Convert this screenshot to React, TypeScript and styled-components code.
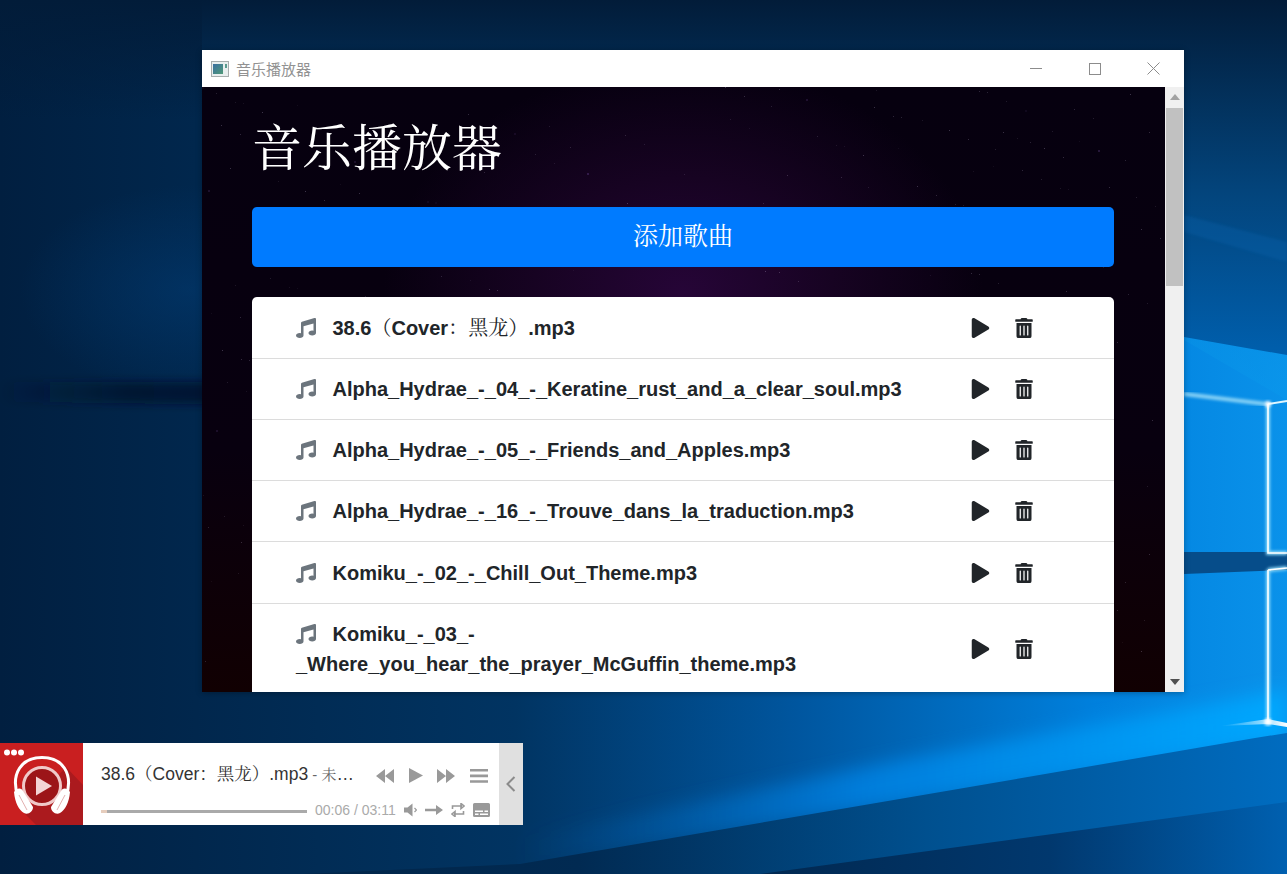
import React from "react";
import styled, { createGlobalStyle } from "styled-components";
import { FaMusic, FaPlay, FaTrashAlt } from "react-icons/fa";

const songs = [
  "38.6（Cover：黑龙）.mp3",
  "Alpha_Hydrae_-_04_-_Keratine_rust_and_a_clear_soul.mp3",
  "Alpha_Hydrae_-_05_-_Friends_and_Apples.mp3",
  "Alpha_Hydrae_-_16_-_Trouve_dans_la_traduction.mp3",
  "Komiku_-_02_-_Chill_Out_Theme.mp3",
  "Komiku_-_03_-_Where_you_hear_the_prayer_McGuffin_theme.mp3",
  "Komiku_-_04_-_Skate.mp3",
];

const stars = Array.from({ length: 420 }, (_, i) => ({
  x: (i * 167 + (i % 7) * 53 + (i % 13) * 29) % 963,
  y: (i * 97 + (i % 11) * 41 + (i % 5) * 17) % 605,
  o: 0.06 + ((i * 13) % 10) / 45,
}));

const splitCjk = (text: string) => text.split(/([\u4e00-\u9fff\uff00-\uffef]+)/);

const App: React.FC = () => {
  return (
    <Desktop>
      <GlobalStyle />
      <Wallpaper viewBox="0 0 1287 874" preserveAspectRatio="none">
        <defs>
          <linearGradient id="wall" x1="0" y1="0" x2="1" y2="0">
            <stop offset="0" stopColor="#011f40" />
            <stop offset="0.4" stopColor="#013462" />
            <stop offset="0.62" stopColor="#00569f" />
            <stop offset="0.85" stopColor="#0080dd" />
            <stop offset="1" stopColor="#0a92ea" />
          </linearGradient>
          <linearGradient id="topShade" x1="0" y1="0" x2="0" y2="1">
            <stop offset="0" stopColor="#021c39" />
            <stop offset="0.55" stopColor="#03457d" />
            <stop offset="1" stopColor="#005fad" />
          </linearGradient>
          <linearGradient id="topLeft" x1="0" y1="0" x2="0" y2="1">
            <stop offset="0" stopColor="#021c39" />
            <stop offset="1" stopColor="#021c39" stopOpacity="0" />
          </linearGradient>
          <linearGradient id="midShade" x1="0" y1="0" x2="0" y2="1">
            <stop offset="0" stopColor="#006ec4" />
            <stop offset="1" stopColor="#0a9aec" stopOpacity="0.4" />
          </linearGradient>
          <linearGradient id="floor" x1="0" y1="0" x2="1" y2="0">
            <stop offset="0" stopColor="#01203f" />
            <stop offset="0.45" stopColor="#012a52" />
            <stop offset="0.72" stopColor="#00508f" />
            <stop offset="1" stopColor="#006cc0" />
          </linearGradient>
          <linearGradient id="floorLow" x1="0" y1="0" x2="1" y2="0">
            <stop offset="0" stopColor="#012850" />
            <stop offset="0.55" stopColor="#01386e" />
            <stop offset="1" stopColor="#0060b0" />
          </linearGradient>
          <linearGradient id="beam" x1="0" y1="0" x2="1" y2="0">
            <stop offset="0" stopColor="#0060b0" stopOpacity="0" />
            <stop offset="0.45" stopColor="#0080e0" stopOpacity="0.9" />
            <stop offset="1" stopColor="#00a8ff" />
          </linearGradient>
          <linearGradient id="flare" x1="0" y1="0" x2="1" y2="0">
            <stop offset="0" stopColor="#bfeeff" stopOpacity="0" />
            <stop offset="1" stopColor="#ffffff" />
          </linearGradient>
          <linearGradient id="leftBand" x1="0" y1="0" x2="1" y2="0">
            <stop offset="0" stopColor="#01142b" stopOpacity="0" />
            <stop offset="0.6" stopColor="#01142b" stopOpacity="0.7" />
            <stop offset="1" stopColor="#01142b" stopOpacity="0.8" />
          </linearGradient>
          <radialGradient id="leftGlow">
            <stop offset="0" stopColor="#02396f" stopOpacity="0.6" />
            <stop offset="1" stopColor="#02396f" stopOpacity="0" />
          </radialGradient>
          <filter id="soft" x="-20%" y="-50%" width="140%" height="200%">
            <feGaussianBlur stdDeviation="9" />
          </filter>
          <filter id="band" x="-5%" y="-100%" width="110%" height="300%">
            <feGaussianBlur stdDeviation="4" />
          </filter>
          <filter id="glow" x="-50%" y="-20%" width="200%" height="140%">
            <feGaussianBlur stdDeviation="1.6" />
          </filter>
        </defs>
        <rect width="1287" height="874" fill="url(#wall)" />
        <rect width="202" height="120" fill="url(#topLeft)" />
        <ellipse cx="190" cy="290" rx="170" ry="105" fill="url(#leftGlow)" />
        <polygon points="0,382 210,382 210,404 0,402" fill="url(#leftBand)" filter="url(#band)" />
        <polygon points="1184,0 1287,0 1287,400 1184,340" fill="url(#midShade)" />
        <polygon points="202,0 1287,0 1287,355 1184,337 202,50" fill="url(#topShade)" />
        <polygon points="1184,215 1287,242 1287,262 1184,232" fill="#0a6bb8" opacity="0.25" filter="url(#glow)" />

        <polygon points="1184,552 1287,552 1287,570 1184,574" fill="#064d8a" />

        <polygon points="520,838 900,760 1287,690 1287,740 520,866" fill="url(#beam)" filter="url(#soft)" />
        <polygon points="0,874 0,888 520,864 1255,738 1287,733 1287,874" fill="url(#floor)" />
        <polygon points="760,874 1287,802 1287,874" fill="url(#floorLow)" />

        <path d="M1184 394 L1266 404" stroke="#a8e4fb" strokeWidth="4" fill="none" opacity="0.8" filter="url(#glow)" />
        <path d="M1268 404 L1287 401" stroke="#dff6ff" strokeWidth="2" fill="none" />
        <path d="M1268 404 V553 H1287 M1268 570 V722 M1268 570 L1287 568" stroke="#8fdcfb" strokeWidth="4" fill="none" filter="url(#glow)" />
        <path d="M1268 404 V553 H1287 M1268 570 V722 M1268 570 L1287 568" stroke="#ffffff" strokeWidth="1.6" fill="none" />
        <polygon points="1220,726 1268,719 1287,723 1287,727 1268,724" fill="url(#flare)" />
        <circle cx="1268" cy="722" r="3.5" fill="#fff" filter="url(#glow)" />
        <circle cx="1268" cy="404" r="3" fill="#fff" filter="url(#glow)" />
      </Wallpaper>

      <Window>
        <TitleBar>
          <AppIcon viewBox="0 0 18 16">
            <defs>
              <linearGradient id="appIcon" x1="0" y1="0" x2="1" y2="1">
                <stop offset="0" stopColor="#3a6fa0" />
                <stop offset="1" stopColor="#4f9a78" />
              </linearGradient>
            </defs>
            <rect x="0.5" y="0.5" width="17" height="15" fill="#e8eeee" stroke="#a7adad" />
            <rect x="2" y="3" width="10" height="10" fill="url(#appIcon)" />
            <rect x="14" y="3" width="2" height="4" fill="#5a9a8e" />
          </AppIcon>
          <WindowTitle>音乐播放器</WindowTitle>
          <WindowButtons>
            <WindowButton>
              <svg width="12" height="12" viewBox="0 0 12 12"><path d="M0 5.5H13" stroke="#8c8c8c" /></svg>
            </WindowButton>
            <WindowButton>
              <svg width="12" height="12" viewBox="0 0 12 12"><rect x="0.5" y="0.5" width="11" height="11" fill="none" stroke="#8c8c8c" /></svg>
            </WindowButton>
            <WindowButton>
              <svg width="13" height="13" viewBox="0 0 13 13"><path d="M0.5 0.5L12.5 12.5M12.5 0.5L0.5 12.5" stroke="#8c8c8c" /></svg>
            </WindowButton>
          </WindowButtons>
        </TitleBar>
        <WindowBody>
          <Page>
            <StarField>
              {stars.map((s, i) => (
                <rect
                  key={i}
                  x={s.x}
                  y={s.y}
                  width={i % 17 === 0 ? 2 : 1}
                  height={i % 17 === 0 ? 2 : 1}
                  fill={i % 17 === 0 ? "#8a5fc0" : "#d9c8ee"}
                  opacity={s.o}
                />
              ))}
            </StarField>
            <PageTitle>音乐播放器</PageTitle>
            <AddButton>添加歌曲</AddButton>
            <SongList>
              {songs.map((song) => (
                <SongRow key={song}>
                  <SongName>
                    <NoteIcon />
                    {splitCjk(song).map((part, i) =>
                      i % 2 === 1 ? <CjkPart key={i}>{part}</CjkPart> : part
                    )}
                  </SongName>
                  <SongActions>
                    <PlayIcon />
                    <TrashIcon />
                  </SongActions>
                </SongRow>
              ))}
            </SongList>
          </Page>
          <ScrollBar>
            <ScrollArrow viewBox="0 0 10 6"><path d="M5 0L10 6H0z" fill="#a3a3a3" /></ScrollArrow>
            <ScrollTrack>
              <ScrollThumb />
            </ScrollTrack>
            <ScrollArrow viewBox="0 0 10 6"><path d="M0 0H10L5 6z" fill="#505050" /></ScrollArrow>
          </ScrollBar>
        </WindowBody>
      </Window>

      <Player>
        <Cover>
          <CoverArt viewBox="0 0 83 82">
            <polygon points="24,70 66,24 83,42 83,82 36,82" fill="#ab1a1e" />
            <circle cx="7" cy="9.5" r="3" fill="#fff" />
            <circle cx="14" cy="9.5" r="3" fill="#fff" />
            <circle cx="21" cy="9.5" r="3" fill="#fff" />
            <path d="M18 54 C10 30 22 14.5 42 14.5 C62 14.5 74 30 66 54" fill="none" stroke="#fff" strokeWidth="3" />
            <circle cx="42" cy="43" r="18.5" fill="#9c1518" stroke="#f0c9c9" strokeWidth="3" />
            <path d="M36 33.5L52 43L36 52.5z" fill="#f3d5d5" />
            <path d="M14 49 C17 44 22 45 23 48 L33 64 C33 69 28 72 24 70 C19 67 15 60 14 49z" fill="#fff" />
            <path d="M70 49 C67 44 62 45 61 48 L51 64 C51 69 56 72 60 70 C65 67 69 60 70 49z" fill="#fff" />
            <path d="M19 52 L27 67 M65 52 L57 67" stroke="#e3b0b0" strokeWidth="1" />
          </CoverArt>
        </Cover>
        <PlayerMain>
          <PlayerTop>
            <TrackInfo>
              38.6（Cover：黑龙）.mp3<TrackAuthor> - 未知艺术家</TrackAuthor>
            </TrackInfo>
            <Controls>
              <ControlIcon width="18" height="14" viewBox="0 0 18 14"><path d="M9 0V14L0 7zM18 0V14L9 7z" /></ControlIcon>
              <ControlIcon width="14" height="15" viewBox="0 0 14 15"><path d="M0 0L14 7.5L0 15z" /></ControlIcon>
              <ControlIcon width="18" height="14" viewBox="0 0 18 14"><path d="M0 0L9 7L0 14zM9 0L18 7L9 14z" /></ControlIcon>
              <ControlIcon width="18" height="14" viewBox="0 0 18 14"><path d="M0 0H18V2.6H0zM0 5.6H18V8.2H0zM0 11.2H18V13.8H0z" /></ControlIcon>
            </Controls>
          </PlayerTop>
          <PlayerBottom>
            <ProgressTrack>
              <ProgressFill style={{ width: `${(6 / 191) * 100}%` }} />
            </ProgressTrack>
            <TimeLabel>00:06 / 03:11</TimeLabel>
            <Modes>
              <ControlIcon width="13" height="14" viewBox="0 0 13 14"><path d="M0 4.5H3.5L8.5 0.5V13.5L3.5 9.5H0z" /><path d="M10.5 5L12.5 7L10.5 9" fill="none" stroke="#999" strokeWidth="1.2" /></ControlIcon>
              <ControlIcon width="18" height="12" viewBox="0 0 18 12"><path d="M0 4.8H11V1L18 6L11 11V7.2H0z" /></ControlIcon>
              <ControlIcon width="14" height="14" viewBox="0 0 14 14"><path d="M1.5 6V3H11M12.5 8V11H3M10 0.5L13 3L10 5.5zM4 8.5L1 11L4 13.5z" fill="none" stroke="#999" strokeWidth="1.6" /></ControlIcon>
              <ControlIcon width="17" height="14" viewBox="0 0 17 14"><path fillRule="evenodd" d="M1.5 0H15.5A1.5 1.5 0 0 1 17 1.5V12.5A1.5 1.5 0 0 1 15.5 14H1.5A1.5 1.5 0 0 1 0 12.5V1.5A1.5 1.5 0 0 1 1.5 0zM2 7.5V9H10V7.5zM11.5 7.5V9H15V7.5zM2 10.5V12H5.5V10.5zM7 10.5V12H15V10.5z" /></ControlIcon>
            </Modes>
          </PlayerBottom>
        </PlayerMain>
        <Collapse>
          <svg width="10" height="16" viewBox="0 0 10 16"><path d="M8.5 1L1.5 8L8.5 15" fill="none" stroke="#8b8b8b" strokeWidth="2" /></svg>
        </Collapse>
      </Player>
    </Desktop>
  );
};

export default App;

const GlobalStyle = createGlobalStyle`
  html, body {
    margin: 0;
    padding: 0;
    overflow: hidden;
  }
  * {
    box-sizing: border-box;
  }
`;

const serifStack = `"Liberation Sans", "Noto Serif CJK SC", serif`;

const Desktop = styled.div`
  position: relative;
  width: 1287px;
  height: 874px;
  overflow: hidden;
  font-family: "Liberation Sans", "Noto Sans CJK SC", sans-serif;
`;

const Wallpaper = styled.svg`
  position: absolute;
  inset: 0;
  width: 100%;
  height: 100%;
`;

const Window = styled.div`
  position: absolute;
  left: 202px;
  top: 50px;
  width: 982px;
  height: 642px;
  display: flex;
  flex-direction: column;
  background: #fff;
  box-shadow: 0 1px 6px rgba(0, 0, 0, 0.3);
`;

const TitleBar = styled.div`
  height: 37px;
  flex: none;
  display: flex;
  align-items: center;
  padding-left: 9px;
  background: #fff;
`;

const AppIcon = styled.svg`
  width: 18px;
  height: 16px;
`;

const WindowTitle = styled.span`
  margin-left: 7px;
  font-size: 15px;
  color: #929292;
`;

const WindowButtons = styled.div`
  margin-left: auto;
  display: flex;
  padding-right: 1px;
`;

const WindowButton = styled.div`
  width: 59px;
  height: 36px;
  display: flex;
  align-items: center;
  justify-content: center;
`;

const WindowBody = styled.div`
  flex: 1;
  min-height: 0;
  display: flex;
`;

const Page = styled.div`
  position: relative;
  flex: 1;
  min-width: 0;
  overflow: hidden;
  padding: 24px 51px 0 50px;
  background: radial-gradient(ellipse 300px 230px at 50% 34%, #260537 0%, #170322 50%, transparent 100%),
    linear-gradient(#06000f 0%, #08000f 60%, #110002 100%);
`;

const StarField = styled.svg`
  position: absolute;
  inset: 0;
  width: 100%;
  height: 100%;
`;

const PageTitle = styled.h1`
  position: relative;
  margin: 0 0 31px;
  height: 65px;
  font-family: "Noto Serif CJK SC", "Liberation Serif", serif;
  font-size: 50px;
  line-height: 67px;
  font-weight: 400;
  color: #fff;
`;

const AddButton = styled.button`
  position: relative;
  display: block;
  width: 100%;
  height: 60px;
  padding: 0 0 6px;
  border: none;
  border-radius: 5px;
  background: #007bff;
  color: #fff;
  font-family: ${serifStack};
  font-size: 25px;
`;

const SongList = styled.div`
  position: relative;
  margin-top: 30.4px;
  background: #fff;
  border-radius: 5px;
`;

const SongRow = styled.div`
  display: flex;
  align-items: center;
  padding: 15px 44px;
  min-height: 61.25px;
  border-bottom: 1px solid #dcdcdc;
`;

const SongName = styled.div`
  width: 620px;
  font-family: ${serifStack};
  font-size: 20px;
  line-height: 30px;
  font-weight: 700;
  color: #212529;
`;

const CjkPart = styled.span`
  font-weight: 400;
`;

const NoteIcon = styled(FaMusic)`
  width: 20px;
  height: 20px;
  margin-right: 16.5px;
  color: #6c757d;
  vertical-align: -3px;
`;

const SongActions = styled.div`
  margin-left: auto;
  display: flex;
  align-items: center;
  gap: 25px;
  padding-right: 37px;
  color: #212529;
`;

const PlayIcon = styled(FaPlay)`
  width: 19px;
  height: 20px;
`;

const TrashIcon = styled(FaTrashAlt)`
  width: 18px;
  height: 20px;
`;

const ScrollBar = styled.div`
  width: 19px;
  flex: none;
  display: flex;
  flex-direction: column;
  align-items: center;
  background: #f0f0f0;
`;

const ScrollArrow = styled.svg`
  width: 10px;
  height: 6px;
  margin: 7px 0;
  flex: none;
`;

const ScrollTrack = styled.div`
  flex: 1;
  width: 100%;
  padding: 1px;
`;

const ScrollThumb = styled.div`
  width: 17px;
  height: 178px;
  background: #c1c1c1;
`;

const Player = styled.div`
  position: absolute;
  left: 0;
  top: 743px;
  width: 523px;
  height: 82px;
  display: flex;
  background: #fff;
`;

const Cover = styled.div`
  width: 83px;
  flex: none;
  background: #c91f20;
`;

const CoverArt = styled.svg`
  display: block;
  width: 83px;
  height: 82px;
`;

const PlayerMain = styled.div`
  flex: 1;
  min-width: 0;
  padding: 19px 11px 0 18px;
`;

const PlayerTop = styled.div`
  display: flex;
  align-items: center;
  height: 24px;
`;

const TrackInfo = styled.div`
  width: 262px;
  padding-bottom: 4px;
  font-family: ${serifStack};
  font-size: 17.5px;
  color: #333;
  white-space: nowrap;
  overflow: hidden;
  text-overflow: ellipsis;
`;

const TrackAuthor = styled.span`
  font-size: 15px;
  color: #666;
`;

const Controls = styled.div`
  margin-left: auto;
  margin-top: 3px;
  display: flex;
  align-items: center;
  gap: 14.67px;
`;

const ControlIcon = styled.svg`
  display: block;
  flex: none;
  fill: #999;
`;

const PlayerBottom = styled.div`
  display: flex;
  align-items: center;
  margin-top: 17px;
  height: 14px;
`;

const ProgressTrack = styled.div`
  width: 206px;
  height: 3px;
  flex: none;
  margin-top: 2px;
  background: #aaa;
`;

const ProgressFill = styled.div`
  height: 100%;
  background: #e6cdbd;
`;

const TimeLabel = styled.span`
  margin-left: 8px;
  font-size: 14px;
  color: #aaa;
  white-space: nowrap;
`;

const Modes = styled.div`
  margin-left: auto;
  margin-right: -2px;
  display: flex;
  align-items: center;
  gap: 8px;
`;

const Collapse = styled.div`
  width: 24px;
  flex: none;
  display: flex;
  align-items: center;
  justify-content: center;
  background: #e0e0e0;
`;
